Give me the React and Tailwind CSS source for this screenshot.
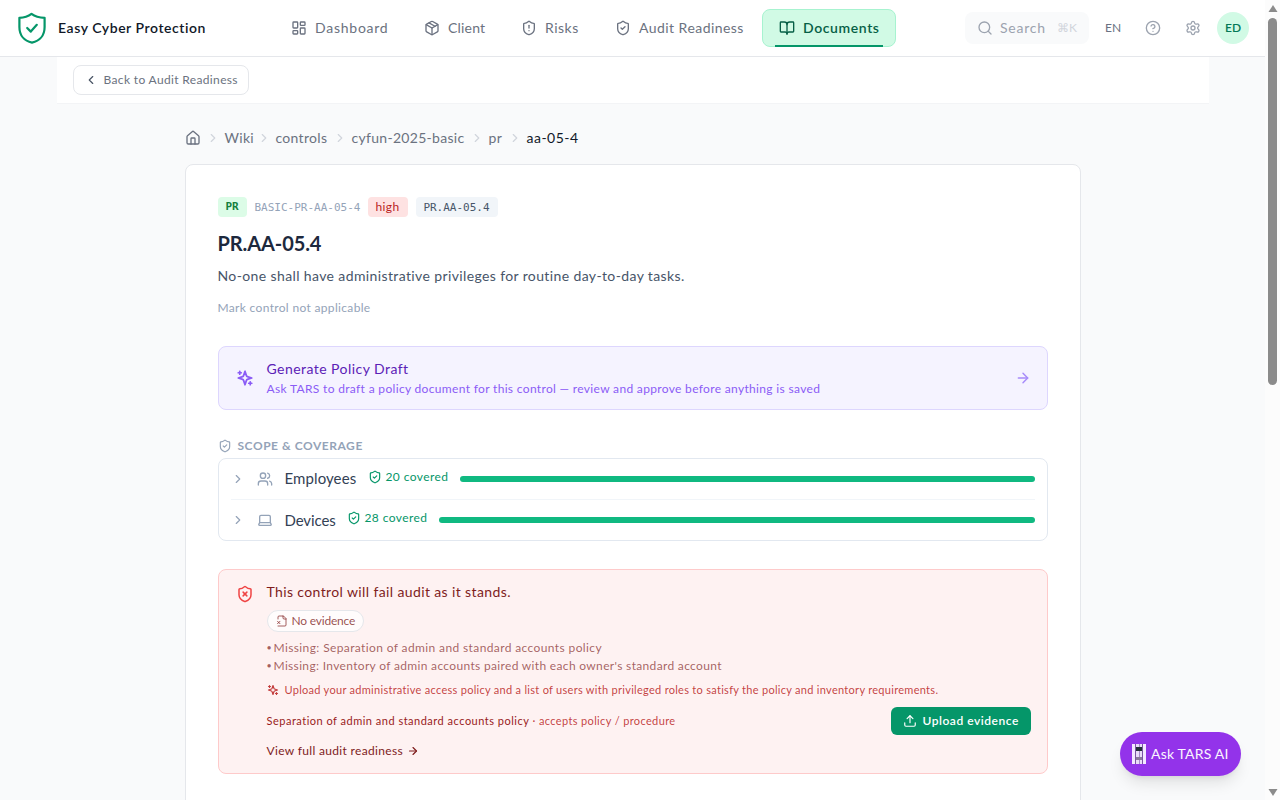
import React from 'react';
import {
  ArrowRight,
  BookOpen,
  ChevronLeft,
  ChevronRight,
  CircleHelp,
  House,
  LayoutDashboard,
  Package,
  Search,
  Settings,
  ShieldAlert,
  ShieldCheck,
  ShieldX,
  Upload,
  Users,
} from 'lucide-react';

const NAV_ITEMS = [
  { label: 'Dashboard', icon: LayoutDashboard, box: 'w-[131px]', text: 'tracking-[0.75px]' },
  { label: 'Client', icon: Package, box: 'w-[95px]', text: 'tracking-[0.2px]' },
  { label: 'Risks', icon: ShieldAlert, box: 'w-[92px]', text: 'tracking-[0.5px]' },
  { label: 'Audit Readiness', icon: ShieldCheck, box: 'w-[162px]', text: 'tracking-[0.45px]' },
  { label: 'Documents', icon: BookOpen, box: 'w-[134px]', text: 'tracking-[0.6px]', active: true },
];

const CRUMBS = [
  { label: 'Wiki', width: 'w-[27px]' },
  { label: 'controls', width: 'w-[52px]' },
  { label: 'cyfun-2025-basic', width: 'w-[113px]' },
  { label: 'pr', width: 'w-[14px]' },
  { label: 'aa-05-4', width: 'w-[53px]', current: true },
];

function Sparkles({ className, strokeWidth = 2 }) {
  return (
    <svg viewBox="0 0 24 24" fill="none" stroke="currentColor" strokeWidth={strokeWidth} strokeLinecap="round" strokeLinejoin="round" className={className}>
      <path d="m12 3-1.912 5.813a2 2 0 0 1-1.275 1.275L3 12l5.813 1.912a2 2 0 0 1 1.275 1.275L12 21l1.912-5.813a2 2 0 0 1 1.275-1.275L21 12l-5.813-1.912a2 2 0 0 1-1.275-1.275L12 3Z" />
      <path d="M5 3v4M19 17v4M3 5h4M17 19h4" />
    </svg>
  );
}

function LaptopIcon({ className }) {
  return (
    <svg viewBox="0 0 24 24" fill="none" stroke="currentColor" strokeWidth="2" strokeLinecap="round" strokeLinejoin="round" className={className}>
      <path d="M20 16V7a2 2 0 0 0-2-2H6a2 2 0 0 0-2 2v9m16 0H4m16 0 1.28 2.55a1 1 0 0 1-.9 1.45H3.62a1 1 0 0 1-.9-1.45L4 16" />
    </svg>
  );
}

function FileMissingIcon({ className }) {
  return (
    <svg viewBox="0 0 24 24" fill="none" stroke="currentColor" strokeWidth="2" strokeLinecap="round" strokeLinejoin="round" className={className}>
      <path d="M4 22h14a2 2 0 0 0 2-2V7l-5-5H6a2 2 0 0 0-2 2v4" />
      <path d="M14 2v4a2 2 0 0 0 2 2h4" />
      <path d="m8 12.500-5 5M3 12.500l5 5" />
    </svg>
  );
}

function LogoShield() {
  return (
    <svg viewBox="0 0 28 32" className="w-7 h-8" fill="none" stroke="#059669" strokeWidth="2.2" strokeLinecap="round" strokeLinejoin="round">
      <path d="M13.5 1.8C10 4.4 6 5.6 1.4 5.8V15c0 8.500 5 14 12.600 15.600C21.600 29 26.600 23.500 26.600 15V5.800C21.500 5.600 17 4.400 13.500 1.800Z" />
      <path d="m9.200 16 3.600 3.600 6-6.800" />
    </svg>
  );
}

function TarsIcon() {
  return (
    <svg viewBox="0 0 14 20" className="w-[14px] h-5" shapeRendering="crispEdges">
      <rect width="3" height="20" fill="#f3e8ff" />
      <rect x="11" width="3" height="20" fill="#f3e8ff" />
      <rect x="4" width="6" height="20" fill="#e9dcf8" />
      <rect x="3" width="1" height="20" fill="#7a55a3" />
      <rect x="10" width="1" height="20" fill="#7a55a3" />
      <path d="M7 0v20" stroke="#a98bc9" strokeWidth="1" />
      <rect x="4" y="3" width="6" height="4" fill="#243038" />
      <rect x="4" y="13" width="6" height="3" fill="#8b7a9b" />
    </svg>
  );
}

function Header() {
  return (
    <header className="h-[57px] shrink-0 bg-white border-b border-gray-200 flex items-center">
      <div className="flex items-center gap-3 pl-[18px] w-[274px]">
        <LogoShield />
        <span className="text-sm font-semibold text-gray-900 whitespace-nowrap tracking-[0.55px]">Easy Cyber Protection</span>
      </div>
      <nav className="flex items-center gap-0.5">
        {NAV_ITEMS.map(({ label, icon: Icon, box, text, active }) => (
          <div
            key={label}
            className={`relative h-[38px] flex items-center gap-2 px-4 rounded-lg border text-sm whitespace-nowrap ${box} ${
              active ? 'bg-[#d1fae5] border-[#a7f3d0] text-[#065f46] font-semibold' : 'border-transparent text-[#6b7280]'
            }`}
          >
            <Icon className="w-4 h-4 shrink-0" />
            <span className={text}>{label}</span>
            {active && <span className="absolute left-3 right-3 -bottom-px h-0.5 bg-[#059669]" />}
          </div>
        ))}
      </nav>
      <div className="ml-auto pr-4 flex items-center text-[#9ca3af]">
        <div className="w-[124px] h-8 rounded-lg bg-gray-50 flex items-center pl-3 text-sm">
          <Search className="w-4 h-4" />
          <span className="ml-[7px] w-[57px] tracking-[0.75px]">Search</span>
          <span className="text-xs text-gray-300">⌘K</span>
        </div>
        <span className="w-12 text-center text-xs text-gray-500">EN</span>
        <span className="w-8 flex justify-center"><CircleHelp className="w-4 h-4" /></span>
        <span className="w-12 flex justify-center"><Settings className="w-4 h-4" /></span>
        <span className="w-8 h-8 rounded-full bg-[#d1fae5] text-[#047857] text-xs font-semibold flex items-center justify-center">ED</span>
      </div>
    </header>
  );
}

function Breadcrumb() {
  return (
    <div className="h-5 flex items-center text-sm text-[#6b7280] whitespace-nowrap">
      <House className="w-4 h-4" />
      {CRUMBS.map(({ label, width, current }) => (
        <React.Fragment key={label}>
          <ChevronRight className="w-3.5 h-3.5 mx-[5px] text-gray-300" />
          <span className={`${width} ${current ? 'text-gray-900 tracking-[0.5px]' : 'tracking-[0.3px]'}`}>{label}</span>
        </React.Fragment>
      ))}
    </div>
  );
}

function CoverageRow({ icon: Icon, label, labelClass, count }) {
  return (
    <div className="h-[41px] pb-px flex items-center">
      <ChevronRight className="w-3.5 h-3.5 text-[#94a3b8]" />
      <Icon className="w-4 h-4 ml-3 text-[#94a3b8]" />
      <span className={`ml-3 text-[15px] text-[#334155] whitespace-nowrap ${labelClass}`}>{label}</span>
      <span className="ml-3 -mt-1 w-20 flex items-center gap-1 text-xs text-[#059669] whitespace-nowrap">
        <ShieldCheck className="w-3.5 h-3.5 shrink-0" />
        <span className="tracking-[0.4px]">{count} covered</span>
      </span>
      <div className="ml-3 flex-1 h-1.5 rounded-full bg-[#10b981]" />
    </div>
  );
}

function AuditWarning() {
  return (
    <section className="mt-7 h-[205px] rounded-lg border border-[#fecaca] bg-[#fef2f2] pl-[17px] pr-4 pt-3 flex gap-[13px] whitespace-nowrap">
      <ShieldX className="w-[18px] h-[18px] mt-[3px] shrink-0 text-[#ef4444]" />
      <div className="flex-1">
        <h3 className="text-sm leading-5 text-[#7f1d1d] tracking-[0.38px]">This control will fail audit as it stands.</h3>
        <div className="mt-2 w-[97px] h-[22px] rounded-full border border-gray-200 bg-white/80 flex items-center gap-1 pl-2 text-xs text-[#7f1d1d]/80">
          <FileMissingIcon className="w-3 h-3 shrink-0 text-[#7f1d1d]/70" />
          <span className="tracking-[-0.2px]">No evidence</span>
        </div>
        <ul className="mt-[7px] text-xs leading-[18px] text-[#7f1d1d]/70">
          <li className="flex gap-0.5"><span className="w-[5px] text-[9px]">•</span><span className="tracking-[0.38px]">Missing: Separation of admin and standard accounts policy</span></li>
          <li className="flex gap-0.5"><span className="w-[5px] text-[9px]">•</span><span className="tracking-[0.33px]">Missing: Inventory of admin accounts paired with each owner's standard account</span></li>
        </ul>
        <div className="mt-[7px] h-4 flex items-center gap-1.5 text-[11px] text-[#b91c1c]/85">
          <Sparkles className="w-3 h-3" strokeWidth={2.4} />
          <span className="tracking-[0.29px]">Upload your administrative access policy and a list of users with privileged roles to satisfy the policy and inventory requirements.</span>
        </div>
        <div className="mt-[9px] h-7 flex items-center justify-between">
          <p className="text-[11px] text-[#b91c1c]/85 tracking-[0.36px]">
            <span className="text-[#991b1b] tracking-[0.5px]">Separation of admin and standard accounts policy</span> · accepts policy / procedure
          </p>
          <button className="w-[140px] h-7 rounded-md bg-[#059669] text-white text-xs font-semibold flex items-center gap-1.5 pl-3">
            <Upload className="w-3.5 h-3.5" />
            <span className="tracking-[0.53px]">Upload evidence</span>
          </button>
        </div>
        <div className="mt-2 h-4 flex items-center gap-1 text-xs text-[#7f1d1d]">
          <span className="tracking-[0.33px]">View full audit readiness</span>
          <ArrowRight className="w-3 h-3" strokeWidth={2.3} />
        </div>
      </div>
    </section>
  );
}

function ControlCard() {
  return (
    <div className="mt-4 h-[700px] bg-white border border-gray-200 rounded-lg px-8 pt-8">
      <div className="h-5 flex items-center gap-2 text-[11px] whitespace-nowrap">
        <span className="w-[29px] h-5 rounded bg-[#dcfce7] text-[#15803d] font-bold font-['DejaVu_Sans_Mono',monospace] flex items-center justify-center">PR</span>
        <span className="w-[105px] pt-0.5 text-[#94a3b8] font-['DejaVu_Sans_Mono',monospace]">BASIC-PR-AA-05-4</span>
        <span className="w-10 h-5 rounded bg-[#fee2e2] text-[#b91c1c] text-xs flex items-center justify-center tracking-[0.4px]">high</span>
        <span className="w-[82px] h-5 pt-0.5 rounded bg-slate-100 text-[#475569] font-['DejaVu_Sans_Mono',monospace] flex items-center justify-center">PR.AA-05.4</span>
      </div>
      <h1 className="mt-3 text-xl leading-7 font-bold text-slate-800 tracking-[-0.1px]">PR.AA-05.4</h1>
      <p className="mt-2 text-sm leading-[22px] text-[#475569] tracking-[0.38px]">No-one shall have administrative privileges for routine day-to-day tasks.</p>
      <p className="mt-[13px] text-xs leading-4 text-[#94a3b8] tracking-[0.33px]">Mark control not applicable</p>

      <section className="mt-[30px] h-16 rounded-lg border border-[#ddd6fe] bg-[#f5f3ff] pl-[17px] pr-4 flex items-center">
        <Sparkles className="w-[18px] h-[18px] text-[#8b5cf6]" strokeWidth={2.3} />
        <div className="ml-[13px] flex-1 whitespace-nowrap">
          <div className="text-sm leading-5 text-[#5b21b6] tracking-[0.45px]">Generate Policy Draft</div>
          <div className="mt-0.5 text-xs leading-4 text-[#8b5cf6] tracking-[0.33px]">Ask TARS to draft a policy document for this control — review and approve before anything is saved</div>
        </div>
        <ArrowRight className="w-4 h-4 text-[#a78bfa]" strokeWidth={2.2} />
      </section>

      <div className="mt-7 h-4 flex items-center gap-1.5 text-[#94a3b8] text-xs font-bold">
        <ShieldCheck className="w-3.5 h-3.5" />
        <span className="tracking-[0.54px]">SCOPE &amp; COVERAGE</span>
      </div>
      <section className="mt-1 h-[83px] rounded-lg border border-slate-200 px-3 divide-y divide-slate-100">
        <CoverageRow icon={Users} label="Employees" labelClass="w-[71px] tracking-[0.1px]" count={20} />
        <CoverageRow icon={LaptopIcon} label="Devices" labelClass="w-[50px] tracking-[-0.1px]" count={28} />
      </section>

      <AuditWarning />
    </div>
  );
}

function Scrollbar() {
  return (
    <div className="w-[15px] h-full shrink-0 bg-[#fcfcfc] flex flex-col items-center">
      <svg viewBox="0 0 10 8" className="mt-[5px] w-[10px] h-2" fill="#8b8b8b"><path d="M5 0 9.500 7H.500Z" /></svg>
      <div className="mt-[5px] w-[9px] h-[367px] rounded-full bg-[#8b8b8b]" />
      <svg viewBox="0 0 10 8" className="mt-auto mb-1 w-[10px] h-2" fill="#8b8b8b"><path d="M5 8 9.500 1H.500Z" /></svg>
    </div>
  );
}

export default function App() {
  return (
    <div className="w-[1280px] h-[800px] overflow-hidden flex bg-gray-50 font-['Lato','Liberation_Sans',sans-serif]">
      <div className="relative flex-1 flex flex-col">
        <Header />
        <div className="mx-auto w-[1152px] h-[47px] shrink-0 bg-white border-b border-gray-100 px-4 pt-2">
          <button className="w-44 h-[30px] rounded-lg border border-gray-200 bg-white flex items-center gap-1.5 pl-[10px] text-xs text-[#6b7280]">
            <ChevronLeft className="w-3.5 h-3.5 text-gray-600" />
            <span className="tracking-[0.35px] whitespace-nowrap">Back to Audit Readiness</span>
          </button>
        </div>
        <main className="mx-auto w-[896px] pt-6">
          <Breadcrumb />
          <ControlCard />
        </main>
        <button className="absolute right-6 bottom-6 w-[121px] h-11 rounded-full bg-[#9333ea] text-purple-50 text-sm flex items-center gap-[5px] pl-3 shadow-lg">
          <TarsIcon />
          <span className="whitespace-nowrap tracking-[0.2px]">Ask TARS AI</span>
        </button>
      </div>
      <Scrollbar />
    </div>
  );
}
